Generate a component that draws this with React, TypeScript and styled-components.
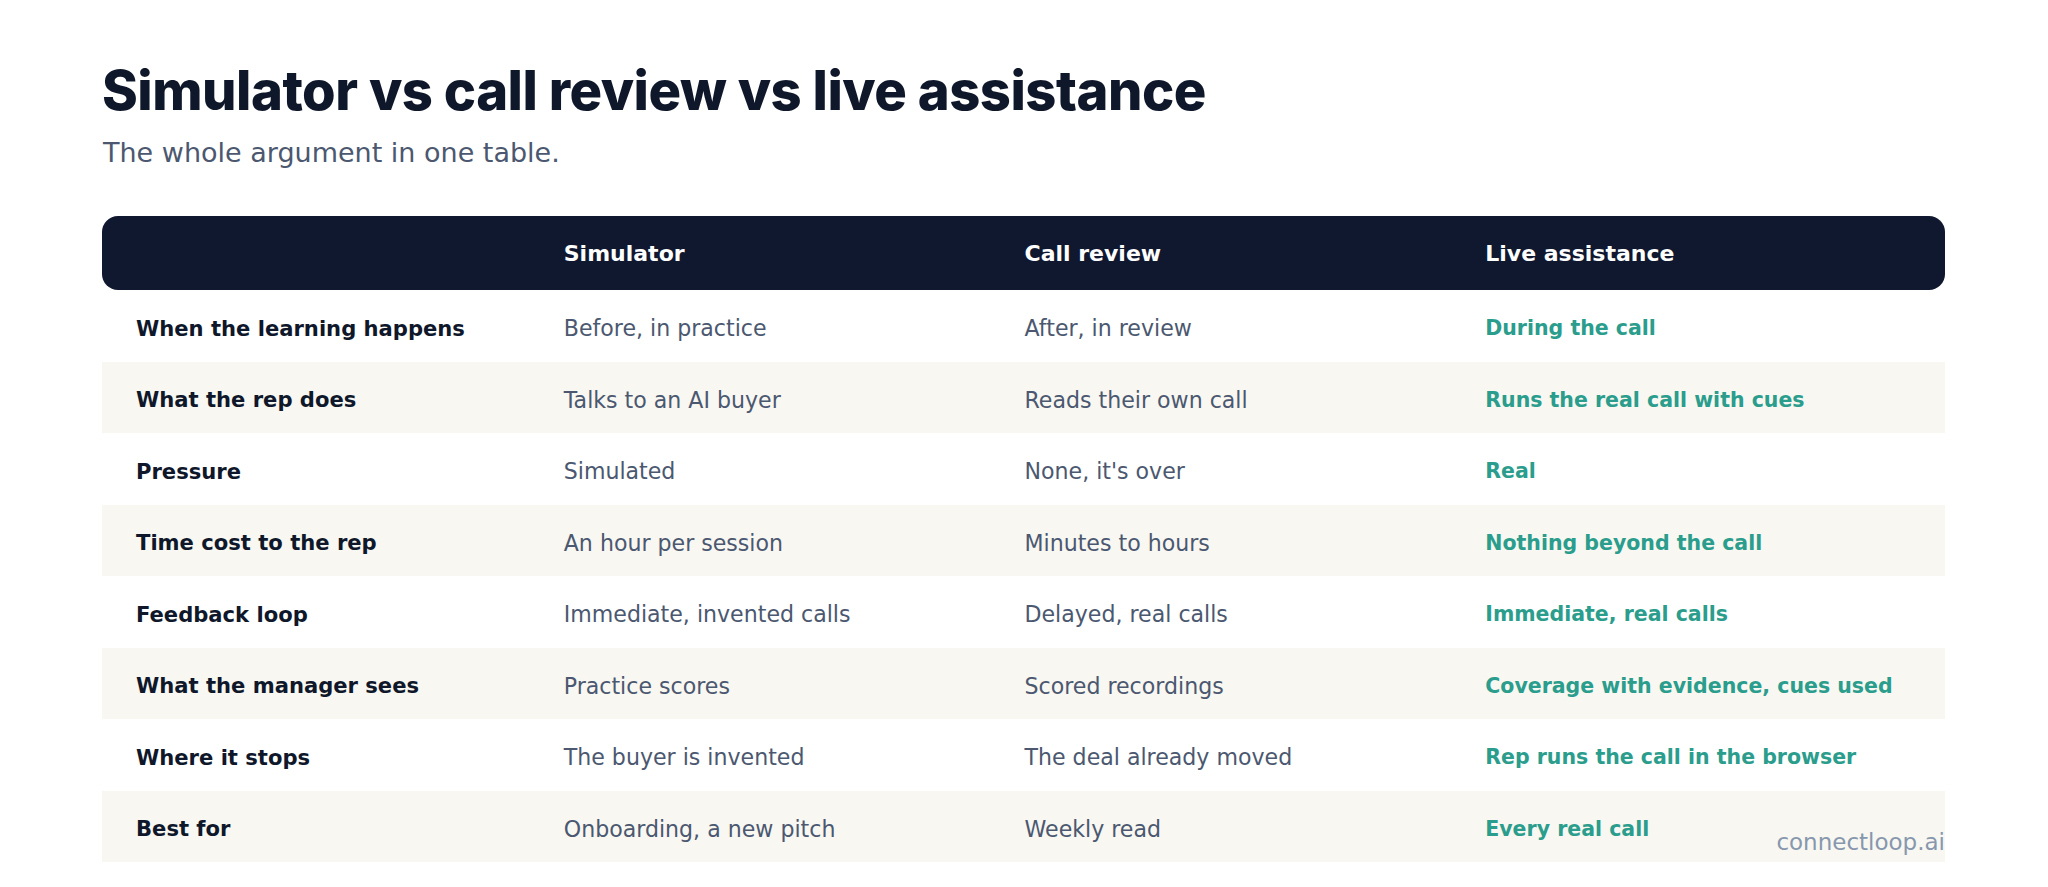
import React from "react";
import styled, { createGlobalStyle } from "styled-components";

const Global = createGlobalStyle`
  html, body { margin: 0; padding: 0; background: #ffffff; }
  body { font-family: "DejaVu Sans", "Noto Sans", sans-serif; -webkit-font-smoothing: antialiased; }
`;

const Page = styled.main`
  position: relative;
  width: 2048px;
  height: 887px;
  box-sizing: border-box;
  padding: 57px 103px 0 102px;
  overflow: hidden;
`;

const Title = styled.h1`
  margin: 0;
  font-family: Inter, "DejaVu Sans", sans-serif;
  font-weight: 800;
  font-size: 54.3px;
  line-height: 66px;
  letter-spacing: -0.5px;
  color: #0f172a;
`;

const Subtitle = styled.p`
  margin: 13px 0 0 1px;
  font-family: "DejaVu Sans", sans-serif;
  font-weight: 400;
  font-size: 27px;
  line-height: 34px;
  color: #4b5870;
`;

const Table = styled.div`
  margin-top: 46px;
  display: grid;
  grid-template-columns: repeat(4, 1fr);
`;

type Kind = "head" | "label" | "body" | "live";

const Row = styled.div<{ $alt?: boolean; $head?: boolean }>`
  display: contents;
  & > * {
    background: ${(p) => (p.$head ? "#101830" : p.$alt ? "#f8f7f2" : "#ffffff")};
    height: ${(p) => (p.$head ? "74px" : "71.5px")};
    padding-top: ${(p) => (p.$head ? "0" : "5px")};
  }
  & > *:first-child {
    border-radius: ${(p) => (p.$head ? "16px 0 0 16px" : "0")};
  }
  & > *:last-child {
    border-radius: ${(p) => (p.$head ? "0 16px 16px 0" : "0")};
  }
`;

const sizes: Record<Kind, string> = {
  head: "22px",
  label: "21.1px",
  body: "22.1px",
  live: "20.5px",
};

const colors: Record<Kind, string> = {
  head: "#ffffff",
  label: "#0f172a",
  body: "#4b5870",
  live: "#2a9d8c",
};

const Cell = styled.div<{ $kind: Kind }>`
  display: flex;
  align-items: center;
  box-sizing: border-box;
  padding-left: ${(p) => (p.$kind === "label" ? "34px" : "1px")};
  font-family: "DejaVu Sans", sans-serif;
  font-size: ${(p) => sizes[p.$kind]};
  font-weight: ${(p) => (p.$kind === "body" ? 400 : 700)};
  color: ${(p) => colors[p.$kind]};
  white-space: nowrap;
`;

const Watermark = styled.div`
  position: absolute;
  right: 103px;
  top: 829px;
  font-family: "DejaVu Sans", sans-serif;
  font-size: 23px;
  line-height: 26px;
  color: #8797ad;
`;

const rows: [string, string, string, string][] = [
  ["When the learning happens", "Before, in practice", "After, in review", "During the call"],
  ["What the rep does", "Talks to an AI buyer", "Reads their own call", "Runs the real call with cues"],
  ["Pressure", "Simulated", "None, it's over", "Real"],
  ["Time cost to the rep", "An hour per session", "Minutes to hours", "Nothing beyond the call"],
  ["Feedback loop", "Immediate, invented calls", "Delayed, real calls", "Immediate, real calls"],
  ["What the manager sees", "Practice scores", "Scored recordings", "Coverage with evidence, cues used"],
  ["Where it stops", "The buyer is invented", "The deal already moved", "Rep runs the call in the browser"],
  ["Best for", "Onboarding, a new pitch", "Weekly read", "Every real call"],
];

export default function App() {
  return (
    <>
      <Global />
      <Page>
        <Title>Simulator vs call review vs live assistance</Title>
        <Subtitle>The whole argument in one table.</Subtitle>
        <Table>
          <Row $head>
            <Cell $kind="head" />
            <Cell $kind="head">Simulator</Cell>
            <Cell $kind="head">Call review</Cell>
            <Cell $kind="head">Live assistance</Cell>
          </Row>
          {rows.map((r, i) => (
            <Row key={r[0]} $alt={i % 2 === 1}>
              <Cell $kind="label">{r[0]}</Cell>
              <Cell $kind="body">{r[1]}</Cell>
              <Cell $kind="body">{r[2]}</Cell>
              <Cell $kind="live">{r[3]}</Cell>
            </Row>
          ))}
        </Table>
        <Watermark>connectloop.ai</Watermark>
      </Page>
    </>
  );
}
